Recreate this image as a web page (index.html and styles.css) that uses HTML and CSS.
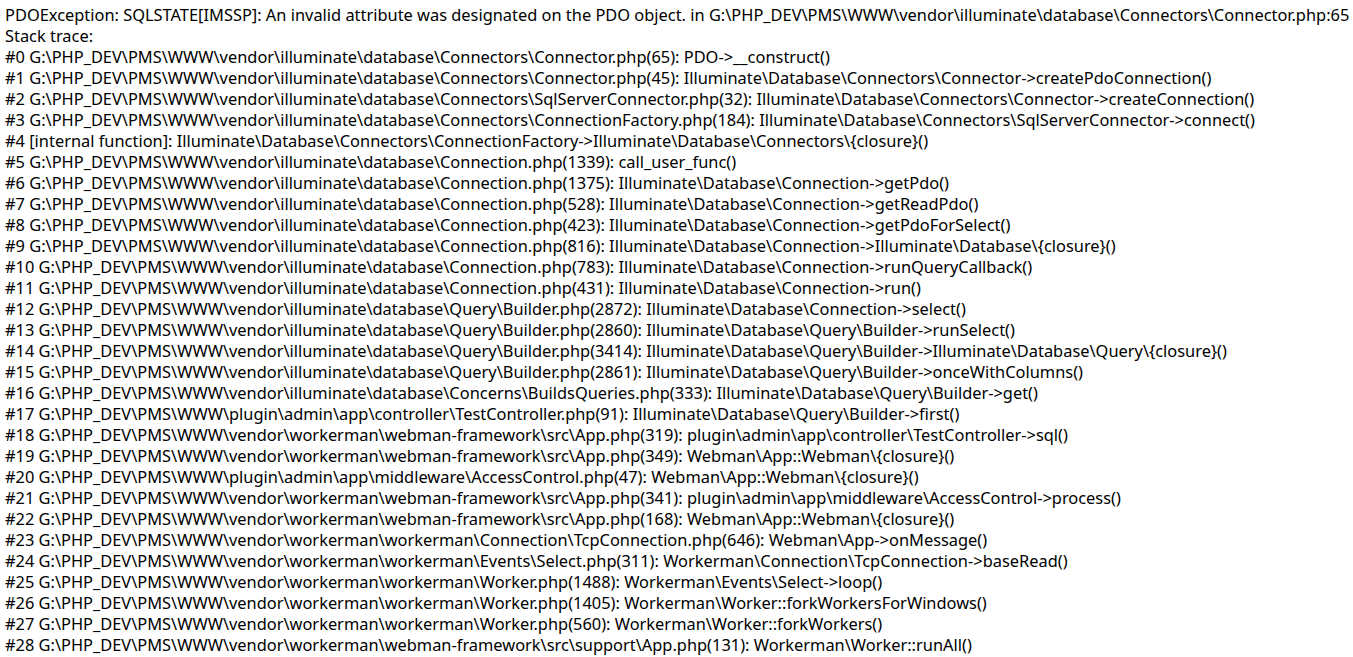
FILE: index.html
```html
<!DOCTYPE html>
<html lang="en">
    <head>
        <meta charset="utf-8" />
        <title>PDOException</title>
        <link rel="stylesheet" href="styles.css">
    </head>
    <body>
        <div class="trace">
            <div class="line">PDOException: SQLSTATE[IMSSP]: An invalid attribute was designated on the PDO object. in G:\PHP_DEV\PMS\WWW\vendor\illuminate\database\Connectors\Connector.php:65</div>
            <div class="line">Stack trace:</div>
            <div class="line">#0 G:\PHP_DEV\PMS\WWW\vendor\illuminate\database\Connectors\Connector.php(65): PDO-&gt;__construct()</div>
            <div class="line">#1 G:\PHP_DEV\PMS\WWW\vendor\illuminate\database\Connectors\Connector.php(45): Illuminate\Database\Connectors\Connector-&gt;createPdoConnection()</div>
            <div class="line">#2 G:\PHP_DEV\PMS\WWW\vendor\illuminate\database\Connectors\SqlServerConnector.php(32): Illuminate\Database\Connectors\Connector-&gt;createConnection()</div>
            <div class="line">#3 G:\PHP_DEV\PMS\WWW\vendor\illuminate\database\Connectors\ConnectionFactory.php(184): Illuminate\Database\Connectors\SqlServerConnector-&gt;connect()</div>
            <div class="line">#4 [internal function]: Illuminate\Database\Connectors\ConnectionFactory-&gt;Illuminate\Database\Connectors\{closure}()</div>
            <div class="line">#5 G:\PHP_DEV\PMS\WWW\vendor\illuminate\database\Connection.php(1339): call_user_func()</div>
            <div class="line">#6 G:\PHP_DEV\PMS\WWW\vendor\illuminate\database\Connection.php(1375): Illuminate\Database\Connection-&gt;getPdo()</div>
            <div class="line">#7 G:\PHP_DEV\PMS\WWW\vendor\illuminate\database\Connection.php(528): Illuminate\Database\Connection-&gt;getReadPdo()</div>
            <div class="line">#8 G:\PHP_DEV\PMS\WWW\vendor\illuminate\database\Connection.php(423): Illuminate\Database\Connection-&gt;getPdoForSelect()</div>
            <div class="line">#9 G:\PHP_DEV\PMS\WWW\vendor\illuminate\database\Connection.php(816): Illuminate\Database\Connection-&gt;Illuminate\Database\{closure}()</div>
            <div class="line">#10 G:\PHP_DEV\PMS\WWW\vendor\illuminate\database\Connection.php(783): Illuminate\Database\Connection-&gt;runQueryCallback()</div>
            <div class="line">#11 G:\PHP_DEV\PMS\WWW\vendor\illuminate\database\Connection.php(431): Illuminate\Database\Connection-&gt;run()</div>
            <div class="line">#12 G:\PHP_DEV\PMS\WWW\vendor\illuminate\database\Query\Builder.php(2872): Illuminate\Database\Connection-&gt;select()</div>
            <div class="line">#13 G:\PHP_DEV\PMS\WWW\vendor\illuminate\database\Query\Builder.php(2860): Illuminate\Database\Query\Builder-&gt;runSelect()</div>
            <div class="line">#14 G:\PHP_DEV\PMS\WWW\vendor\illuminate\database\Query\Builder.php(3414): Illuminate\Database\Query\Builder-&gt;Illuminate\Database\Query\{closure}()</div>
            <div class="line">#15 G:\PHP_DEV\PMS\WWW\vendor\illuminate\database\Query\Builder.php(2861): Illuminate\Database\Query\Builder-&gt;onceWithColumns()</div>
            <div class="line">#16 G:\PHP_DEV\PMS\WWW\vendor\illuminate\database\Concerns\BuildsQueries.php(333): Illuminate\Database\Query\Builder-&gt;get()</div>
            <div class="line">#17 G:\PHP_DEV\PMS\WWW\plugin\admin\app\controller\TestController.php(91): Illuminate\Database\Query\Builder-&gt;first()</div>
            <div class="line">#18 G:\PHP_DEV\PMS\WWW\vendor\workerman\webman-framework\src\App.php(319): plugin\admin\app\controller\TestController-&gt;sql()</div>
            <div class="line">#19 G:\PHP_DEV\PMS\WWW\vendor\workerman\webman-framework\src\App.php(349): Webman\App::Webman\{closure}()</div>
            <div class="line">#20 G:\PHP_DEV\PMS\WWW\plugin\admin\app\middleware\AccessControl.php(47): Webman\App::Webman\{closure}()</div>
            <div class="line">#21 G:\PHP_DEV\PMS\WWW\vendor\workerman\webman-framework\src\App.php(341): plugin\admin\app\middleware\AccessControl-&gt;process()</div>
            <div class="line">#22 G:\PHP_DEV\PMS\WWW\vendor\workerman\webman-framework\src\App.php(168): Webman\App::Webman\{closure}()</div>
            <div class="line">#23 G:\PHP_DEV\PMS\WWW\vendor\workerman\workerman\Connection\TcpConnection.php(646): Webman\App-&gt;onMessage()</div>
            <div class="line">#24 G:\PHP_DEV\PMS\WWW\vendor\workerman\workerman\Events\Select.php(311): Workerman\Connection\TcpConnection-&gt;baseRead()</div>
            <div class="line">#25 G:\PHP_DEV\PMS\WWW\vendor\workerman\workerman\Worker.php(1488): Workerman\Events\Select-&gt;loop()</div>
            <div class="line">#26 G:\PHP_DEV\PMS\WWW\vendor\workerman\workerman\Worker.php(1405): Workerman\Worker::forkWorkersForWindows()</div>
            <div class="line">#27 G:\PHP_DEV\PMS\WWW\vendor\workerman\workerman\Worker.php(560): Workerman\Worker::forkWorkers()</div>
            <div class="line">#28 G:\PHP_DEV\PMS\WWW\vendor\workerman\webman-framework\src\support\App.php(131): Workerman\Worker::runAll()</div>
        </div>
    </body>
</html>
```

FILE: styles.css
```css
body {
    margin: 0;
    padding: 4px 5px;
    background: #fff;
    color: #000;
    font-family: "Noto Sans", "Open Sans", sans-serif;
    font-size: 16.4px;
}

.trace .line {
    line-height: 21px;
    white-space: nowrap;
}
```
